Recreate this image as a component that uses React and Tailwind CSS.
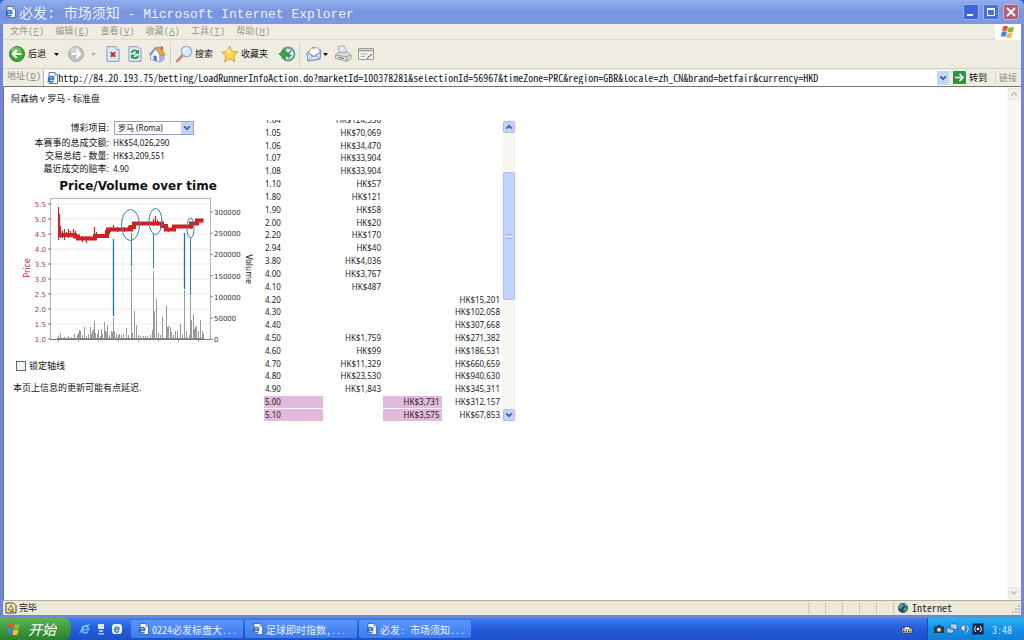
import React, { useState } from 'react';

const ADDRESS =
  'http://84.20.193.75/betting/LoadRunnerInfoAction.do?marketId=100378281&selectionId=56967&timeZone=PRC&region=GBR&locale=zh_CN&brand=betfair&currency=HKD';

const MENUS = [
  ['文件', 'F'],
  ['编辑', 'E'],
  ['查看', 'V'],
  ['收藏', 'A'],
  ['工具', 'T'],
  ['帮助', 'H'],
];

const SUMMARY = [
  ['本赛事的总成交额:', 'HK$54,026,290'],
  ['交易总结 - 数量:', 'HK$3,209,551'],
  ['最近成交的赔率:', '4.90'],
];

// odds, to back, to lay, traded
const ROWS = [
  ['1.04', 'HK$124,356', '', ''],
  ['1.05', 'HK$70,069', '', ''],
  ['1.06', 'HK$34,470', '', ''],
  ['1.07', 'HK$33,904', '', ''],
  ['1.08', 'HK$33,904', '', ''],
  ['1.10', 'HK$57', '', ''],
  ['1.80', 'HK$121', '', ''],
  ['1.90', 'HK$58', '', ''],
  ['2.00', 'HK$20', '', ''],
  ['2.20', 'HK$170', '', ''],
  ['2.94', 'HK$40', '', ''],
  ['3.80', 'HK$4,036', '', ''],
  ['4.00', 'HK$3,767', '', ''],
  ['4.10', 'HK$487', '', ''],
  ['4.20', '', '', 'HK$15,201'],
  ['4.30', '', '', 'HK$102,058'],
  ['4.40', '', '', 'HK$307,668'],
  ['4.50', 'HK$1,759', '', 'HK$271,382'],
  ['4.60', 'HK$99', '', 'HK$186,531'],
  ['4.70', 'HK$11,329', '', 'HK$660,659'],
  ['4.80', 'HK$23,530', '', 'HK$940,630'],
  ['4.90', 'HK$1,843', '', 'HK$345,311'],
  ['5.00', '', 'HK$3,731', 'HK$312,157'],
  ['5.10', '', 'HK$3,575', 'HK$67,853'],
];

const PRICE_TICKS = ['5.5', '5.0', '4.5', '4.0', '3.5', '3.0', '2.5', '2.0', '1.5', '1.0'];
const VOLUME_TICKS = ['300000', '250000', '200000', '150000', '100000', '50000', '0'];

// x, height
const VOLUMES = [
  [38, 3], [40, 6], [44, 2], [48, 3], [51, 2], [54, 5], [57, 4], [58, 6], [59, 9], [60, 8],
  [62, 4], [64, 12], [66, 3], [68, 5], [70, 12], [71, 5], [72, 8], [73, 10], [74, 18], [75, 6], [77, 5],
  [78, 9], [80, 3], [81, 10], [82, 5], [84, 17], [85, 8], [86, 7], [87, 14], [89, 4], [91, 8], [92, 7],
  [93, 21], [94, 8], [96, 5], [98, 4], [99, 5], [101, 4], [103, 5], [106, 11], [108, 4],
  [111, 71], [112, 6], [114, 28], [116, 14], [118, 4], [120, 3], [123, 3], [125, 3], [127, 3], [130, 4],
  [132, 9], [133, 68], [134, 28], [136, 40], [138, 6], [140, 4], [142, 22], [146, 33], [147, 12],
  [148, 13], [150, 12], [151, 7], [153, 4], [155, 8], [157, 8], [160, 15], [162, 5], [164, 49],
  [166, 8], [169, 4], [170, 43], [171, 19], [173, 25], [174, 10], [175, 12], [176, 13], [178, 8], [180, 19],
  [182, 8], [183, 5],
];

// x, top and bottom of the short price swings around the main line
const SWINGS = [
  [39, 36, 58], [40, 48, 60], [42, 53, 60], [44, 51, 62], [46, 54, 59], [48, 51, 60], [50, 53, 58], [53, 51, 58],
  [55, 53, 60], [58, 57, 62], [62, 58, 64], [66, 58, 65], [69, 58, 62], [74, 49, 60], [76, 54, 60], [84, 56, 60],
  [90, 49, 54], [93, 47, 53], [97, 49, 54], [104, 49, 54], [108, 48, 53], [133, 41, 48], [135, 38, 46], [137, 42, 48],
  [142, 45, 50], [148, 50, 54], [171, 45, 51],
];

const IeIcon = ({ className }) => (
  <svg viewBox="0 0 12 12" className={className} aria-hidden="true">
    <path d="M3 .5h6l2.500 2.500v8.500H3z" fill="#fff" stroke="#2c4a8c" strokeWidth=".7" />
    <path d="M9 .5v2.500h2.500" fill="#cfdcf5" stroke="#2c4a8c" strokeWidth=".6" />
    <path d="M7.700 7H2.500a2.700 2.700 0 0 1 5.200-.7zM7.500 8.700a2.700 2.700 0 0 1-5-1.700" fill="none" stroke="#2468c0" strokeWidth="1.500" />
    <path d="M.6 10.200c1.500 0 6-3 8.300-6.600" fill="none" stroke="#3a86d8" strokeWidth=".8" />
  </svg>
);

const BlueE = () => (
  <svg viewBox="0 0 12 12" className="h-3 w-3" aria-hidden="true">
    <path d="M9.500 6.500H3a3.300 3.300 0 0 1 6.500-.9zM9 8.500a3.300 3.300 0 0 1-6-2" fill="none" stroke="#5fc0ff" strokeWidth="1.700" />
    <path d="M1.200 10.500C.3 8 5 2 10.800 1.700" fill="none" stroke="#8fd4ff" strokeWidth=".9" />
  </svg>
);

const WindowsFlag = ({ className }) => (
  <svg viewBox="0 0 16 14" className={className} aria-hidden="true">
    <path d="M3 1.500c2-1.200 3.500-1 5 0L7 6.300c-1.700-1-3.200-1-5 0z" fill="#e8542c" />
    <path d="M8.700 1.800c1.800 1 3.500.9 5.300 0l-1.200 5c-1.800.9-3.400.9-5.100 0z" fill="#7dbb3c" />
    <path d="M1.800 7.100c1.800-1 3.300-1 5 0l-1.100 4.800c-1.700-1-3.200-1-5 0z" fill="#4a82dc" />
    <path d="M7.500 7.500c1.700 1 3.300.9 5.100 0l-1.200 4.900c-1.700.9-3.300.9-5 0z" fill="#f5c22e" />
  </svg>
);

const Caret = ({ className }) => (
  <svg viewBox="0 0 5 3" className={`h-[3px] w-[5px] ${className}`} aria-hidden="true">
    <path d="M0 0h5L2.500 3z" fill="currentColor" />
  </svg>
);

const Chevron = ({ up, className }) => (
  <svg viewBox="0 0 8 6" className={className} aria-hidden="true">
    <path d={up ? 'M1.200 4.600 4 1.800l2.800 2.800' : 'M1.200 1.400 4 4.200l2.800-2.800'} fill="none" stroke="currentColor" strokeWidth="1.800" />
  </svg>
);

const ArrowBall = ({ forward }) => (
  <svg viewBox="0 0 18 18" className="h-[18px] w-[18px]" aria-hidden="true">
    <circle cx="9" cy="9" r="7.500" fill={forward ? '#c2c2be' : '#3fa834'} stroke={forward ? '#acaca8' : '#2c8426'} />
    <ellipse cx="8" cy="5.500" rx="5" ry="3.400" fill="#fff" opacity=".3" />
    <path d={forward ? 'M4.500 9h8M9.200 5l4 4-4 4' : 'M13.500 9h-8M8.800 5l-4 4 4 4'} fill="none" stroke="#fff" strokeWidth="2" />
  </svg>
);

const StopIcon = () => (
  <svg viewBox="0 0 14 16" className="h-4 w-3.5" aria-hidden="true">
    <path d="M1 .7h9l3 3v11.600H1z" fill="#dce9fc" stroke="#7c98cc" />
    <path d="M10 .7v3h3" fill="#fff" stroke="#7c98cc" strokeWidth=".8" />
    <path d="m4.800 6.300 4.400 4.400m0-4.400-4.400 4.400" stroke="#cc3018" strokeWidth="2.200" />
  </svg>
);

const RefreshIcon = () => (
  <svg viewBox="0 0 14 16" className="h-4 w-3.5" aria-hidden="true">
    <path d="M1 .7h9l3 3v11.600H1z" fill="#dce9fc" stroke="#7c98cc" />
    <path d="M3.700 7c.3-2.600 4-3.600 5.800-1.300" fill="none" stroke="#2a9a34" strokeWidth="1.900" />
    <path d="M11 3.500v4.300H6.700z" fill="#2a9a34" />
    <path d="M10.300 9.500c-.3 2.600-4 3.600-5.800 1.300" fill="none" stroke="#2a9a34" strokeWidth="1.900" />
    <path d="M3 13V8.700h4.300z" fill="#2a9a34" />
  </svg>
);

const HomeIcon = () => (
  <svg viewBox="0 0 18 18" className="h-[18px] w-[18px]" aria-hidden="true">
    <path d="M12.500 1.500h2.300v5h-2.300z" fill="#c0522c" />
    <path d="M2.500 9 7 4l5 5v8l-9.500-2.500z" fill="#f2f6ff" stroke="#7c92c4" strokeWidth=".7" />
    <path d="m12 9 4 .5v5L12 17z" fill="#a4bce8" stroke="#7c92c4" strokeWidth=".7" />
    <path d="M.8 9.800 7 2.300l1.500.7L3.300 10.300z" fill="#6f97dc" />
    <path d="M7.300 2.300 11.500 2l6 7.500-5 1.200z" fill="#e9a052" stroke="#b8702c" strokeWidth=".5" />
    <path d="m5.500 10.500 3.300.7v5l-3.300-.9z" fill="#5c7cc0" />
  </svg>
);

const SearchIcon = () => (
  <svg viewBox="0 0 18 18" className="h-[18px] w-[18px]" aria-hidden="true">
    <path d="m7.200 10.800-5 5.300" stroke="#c98a68" strokeWidth="2.800" strokeLinecap="round" />
    <circle cx="11.500" cy="6.500" r="5.200" fill="#d5ecfc" stroke="#8cb0dc" strokeWidth="1.300" />
    <path d="M8.500 6c.3-1.500 1.300-2.300 2.800-2.400" fill="none" stroke="#fff" strokeWidth="1.200" />
  </svg>
);

const StarIcon = () => (
  <svg viewBox="0 0 18 18" className="h-[18px] w-[18px]" aria-hidden="true">
    <path d="m8.500 1.200 2.300 5.100 6.200.6-4.600 4 1.600 5.800-5.300-3-5.200 3.200 1.400-6L.8 7.200l5.800-.7z" fill="#fbd850" stroke="#d09a28" strokeWidth=".9" />
    <path d="m8.500 3.500 1.500 3.800-5 .8z" fill="#fff4b8" />
  </svg>
);

const HistoryIcon = () => (
  <svg viewBox="0 0 18 18" className="h-[18px] w-[18px]" aria-hidden="true">
    <circle cx="10" cy="9" r="6.500" fill="#d6e8ee" stroke="#5c9c8c" strokeWidth="1.800" />
    <path d="M10 9.500 13.500 5M10 9.500l3.500 1.500" stroke="#3b6a94" strokeWidth="1.200" />
    <path d="M.8 9 7.500 4v3c3 0 4.300 2.500 3.800 6.500-.8-2-1.800-2.600-3.800-2.500v3z" fill="#3aa63c" stroke="#237a2c" strokeWidth=".6" />
  </svg>
);

const MailIcon = () => (
  <svg viewBox="0 0 18 18" className="h-[18px] w-[18px]" aria-hidden="true">
    <path d="m2 8 6-6 8 3-1 9-12 2z" fill="#b8d4f4" stroke="#6488c0" strokeWidth=".8" />
    <path d="m5 4 8-1.500 1.500 5L9 11 4.500 8.500z" fill="#fff" stroke="#e0a878" strokeWidth=".8" />
    <path d="m2 8 7 4 6.500-5-.5 7-12 2z" fill="#d9e9fc" stroke="#6488c0" strokeWidth=".8" />
    <path d="m3 16 4.500-5m7.500 3-4.500-3.200" stroke="#6488c0" strokeWidth=".7" />
  </svg>
);

const PrintIcon = () => (
  <svg viewBox="0 0 18 18" className="h-[18px] w-[18px]" aria-hidden="true">
    <path d="M4 1.500 10 1l3 7-7 .5z" fill="#e4edfa" stroke="#8c9cb8" strokeWidth=".8" />
    <path d="m1.500 10 3-2.500 9-.5 3.500 3v3.500l-4 3-11.500-3z" fill="#dcdcd8" stroke="#94948e" strokeWidth=".8" />
    <path d="m1.500 10 11 1.800L17 10m-4.500 1.800v4.500" fill="none" stroke="#94948e" strokeWidth=".8" />
    <path d="m4.500 12.500 5.500 1" stroke="#5c6c8c" strokeWidth="1.200" />
  </svg>
);

const DiscussIcon = () => (
  <svg viewBox="0 0 18 14" className="h-3.5 w-[18px]" aria-hidden="true">
    <path d="M1.500 1.500h15v11h-15z" fill="#f4f4f0" stroke="#9c9c98" />
    <path d="M1.500 3.500h15" stroke="#9c9c98" strokeWidth="1.600" />
    <path d="M3.500 7h7m-7 2.500H8" stroke="#a8a8a4" />
    <path d="M10 11.500 15 7" stroke="#84847c" strokeWidth="1.300" />
  </svg>
);

const Globe = () => (
  <svg viewBox="0 0 12 12" className="h-3 w-3" aria-hidden="true">
    <circle cx="6" cy="6" r="5" fill="#1e4a7c" />
    <path d="M2 3.500C4 1 6 1.500 6.500 3S4.500 5 4 6.500 2 6 1.500 6zM7 6c2-1.500 3.500-.5 3.500.5S8.500 10 7.500 9.500 6 7 7 6z" fill="#4fa868" />
    <path d="M7.500 2.500 9.500 4" stroke="#bfe0f4" />
  </svg>
);

const PriceChart = () => (
  <svg viewBox="0 0 240 170" className="block h-[170px] w-[240px]" role="img" aria-label="Price/Volume over time">
    <text x="118" y="12" textAnchor="middle" className="fill-[#111] font-['DejaVu_Sans',sans-serif] text-[12px] font-bold">
      Price/Volume over time
    </text>
    <rect x="30.500" y="20.500" width="160" height="141" fill="#fff" stroke="#b4b4b4" />
    {PRICE_TICKS.map((tick, i) => (
      <g key={tick}>
        <path d={`M31 ${26 + i * 15}h159`} stroke="#ececec" />
        <path d={`M28 ${26 + i * 15}h3`} stroke="#b06060" />
        <text x="26" y={29 + i * 15} textAnchor="end" className="fill-[#a83a3a] font-['DejaVu_Sans',sans-serif] text-[7px]">
          {tick}
        </text>
      </g>
    ))}
    {VOLUME_TICKS.map((tick, i) => (
      <g key={tick}>
        <path d={`M190 ${34 + i * 21.2}h3`} stroke="#888" />
        <text x="194" y={37 + i * 21.2} className="fill-[#333] font-['DejaVu_Sans',sans-serif] text-[7px]">
          {tick}
        </text>
      </g>
    ))}
    <text transform="translate(10 90) rotate(-90)" textAnchor="middle" className="fill-[#a83a3a] font-['DejaVu_Sans',sans-serif] text-[8px]">
      Price
    </text>
    <text transform="translate(226 91) rotate(90)" textAnchor="middle" className="fill-[#222] font-['DejaVu_Sans',sans-serif] text-[8px]">
      Volume
    </text>
    <path d={VOLUMES.map(([x, h]) => `M${x + 0.5} 161v-${h}`).join('')} stroke="#9a9a9a" />
    <path d="M37 160.500h147" stroke="#8c8c8c" />
    <path d="M30.500 161.500h160" stroke="#777" />
    <path d="M38.500 161v3M58.500 161v3M78.500 161v3M98.500 161v3M118.500 161v3M138.500 161v3M158.500 161v3M178.500 161v3" stroke="#888" strokeWidth=".7" />
    <path d={`M38.500 62V29${SWINGS.map(([x, top, bottom]) => `M${x + 0.5} ${top}V${bottom}`).join('')}`} stroke="#c62828" strokeWidth="1.200" />
    <path
      d="M39 57H55V58.500H58V60.500H75V58H87V54H88V51.500H111V49H114V45.500H142V48H146V51.500H154V48.500H171V45.500H177V42.500H183.500"
      fill="none"
      stroke="#cc2222"
      strokeWidth="4"
    />
    <g fill="none" stroke="#2f83c2">
      <ellipse cx="110.500" cy="47" rx="9" ry="15.500" />
      <ellipse cx="135.500" cy="43.500" rx="6.500" ry="13" />
      <ellipse cx="170.500" cy="50" rx="3.500" ry="10" />
      <path d="M93.500 61v77M164.500 55v56" stroke="#1576b4" strokeWidth="1.300" />
      <path d="M111.500 55v34M133.500 55v35M170.500 60v57" />
    </g>
  </svg>
);

const ToolButton = ({ label, className, children }) => (
  <button type="button" aria-label={label} className={`flex shrink-0 items-center whitespace-nowrap ${className}`}>
    {children}
  </button>
);

const BrowserChrome = () => (
  <header>
    <div className="flex h-6 items-center rounded-t-md bg-linear-to-b from-[#92aeee] via-[#7894de] to-[#7b99e4] pr-[5px] pl-1">
      <IeIcon className="h-3 w-3" />
      <h1 className="ml-[3px] flex-1 truncate pt-1 font-['Liberation_Mono','Noto_Sans_CJK_SC',monospace] text-[13px] leading-5 text-[#eef3ff]">
        <span className="text-[14px]">必发: 市场须知</span> - Microsoft Internet Explorer
      </h1>
      <div className="flex gap-1">
        <button type="button" aria-label="最小化" className="flex h-4 w-4 items-end rounded-xs border border-[#9db4f0] bg-[#3f66d4] p-[3px]">
          <span className="h-0.5 w-1.5 bg-white" />
        </button>
        <button type="button" aria-label="最大化" className="flex h-4 w-4 items-center justify-center rounded-xs border border-[#9db4f0] bg-[#4a70d8]">
          <span className="h-2 w-2 border border-t-2 border-white" />
        </button>
        <button type="button" aria-label="关闭" className="flex h-4 w-4 items-center justify-center rounded-xs border border-[#d8b0c4] bg-[#b0607c]">
          <svg viewBox="0 0 10 10" className="h-2.5 w-2.5" aria-hidden="true">
            <path d="m1 1 8 8m0-8L1 9" stroke="#fff" strokeWidth="1.800" />
          </svg>
        </button>
      </div>
    </div>

    <div className="mx-[3px] bg-[#efede2]">
      <div className="flex h-4 items-center border-b border-[#dddacb]">
        <nav className="flex flex-1 gap-[11px] pl-[7px] font-['Liberation_Mono','Noto_Sans_CJK_SC',monospace] text-[9px] leading-4 text-[#99978e]">
          {MENUS.map(([name, key]) => (
            <button type="button" key={key} className="whitespace-nowrap">
              {name}(<u>{key}</u>)
            </button>
          ))}
        </nav>
        <div className="flex h-4 w-[26px] items-center justify-center bg-white">
          <WindowsFlag className="h-3.5 w-4" />
        </div>
      </div>

      <div className="flex h-[29px] items-center border-b border-[#d5d2c3] pl-[5px] font-['Noto_Sans_CJK_SC',sans-serif] text-[9px] text-[#111]">
        <ToolButton label="后退" className="gap-0.5">
          <ArrowBall />
          后退
        </ToolButton>
        <Caret className="ml-2" />
        <ToolButton label="前进" className="ml-2">
          <ArrowBall forward />
        </ToolButton>
        <Caret className="ml-1.5 text-[#b4b2a8]" />
        <ToolButton label="停止" className="ml-2.5">
          <StopIcon />
        </ToolButton>
        <ToolButton label="刷新" className="ml-2">
          <RefreshIcon />
        </ToolButton>
        <ToolButton label="主页" className="ml-1.5">
          <HomeIcon />
        </ToolButton>
        <span className="ml-1 h-6 w-px bg-[#d5d2c3]" />
        <ToolButton label="搜索" className="ml-1 gap-0.5">
          <SearchIcon />
          搜索
        </ToolButton>
        <ToolButton label="收藏夹" className="ml-2 gap-0.5">
          <StarIcon />
          收藏夹
        </ToolButton>
        <ToolButton label="历史" className="ml-2.5">
          <HistoryIcon />
        </ToolButton>
        <span className="ml-[3px] h-6 w-px bg-[#d5d2c3]" />
        <ToolButton label="邮件" className="ml-[5px]">
          <MailIcon />
        </ToolButton>
        <Caret />
        <ToolButton label="打印" className="ml-1.5">
          <PrintIcon />
        </ToolButton>
        <ToolButton label="讨论" className="ml-[5px]">
          <DiscussIcon />
        </ToolButton>
      </div>

      <form className="flex h-[17px] items-center pl-1 font-['Noto_Sans_CJK_SC',sans-serif] text-[9px]" onSubmit={(e) => e.preventDefault()}>
        <label htmlFor="address" className="whitespace-nowrap font-['Liberation_Mono','Noto_Sans_CJK_SC',monospace] text-[#8c8a80]">
          地址(<u>D</u>)
        </label>
        <div className="ml-0.5 flex h-4 min-w-0 flex-1 items-center border-l border-[#a8b8cc] bg-white pl-0.5">
          <IeIcon className="h-3 w-3 shrink-0" />
          <input
            id="address"
            defaultValue={ADDRESS}
            className="min-w-0 flex-1 font-['Noto_Sans_Mono_CJK_SC','Liberation_Mono',monospace] text-[10px] leading-3 text-[#111] outline-none"
          />
          <button type="button" aria-label="展开地址" className="flex h-3.5 w-3 items-center justify-center bg-[#c6d5fa] text-[#3d5a9c]">
            <Chevron className="h-1.5 w-2" />
          </button>
        </div>
        <button type="submit" className="ml-1 flex items-center gap-[3px] whitespace-nowrap text-[#111]">
          <svg viewBox="0 0 13 13" className="h-[13px] w-[13px]" aria-hidden="true">
            <rect width="13" height="13" rx="1" fill="#2f9440" />
            <path d="M2 6.500h8M6.500 3l3.500 3.500L6.500 10" fill="none" stroke="#fff" strokeWidth="1.700" />
          </svg>
          转到
        </button>
        <span className="ml-2 border-l border-[#d5d2c3] pr-1 pl-[3px] whitespace-nowrap text-[#8c8a80]">链接</span>
      </form>
    </div>
  </header>
);

const OddsTable = () => (
  <div className="flex h-[302px] w-[253px] shrink-0">
    <div className="flex flex-1 flex-col justify-end overflow-hidden">
      <table className="h-[309px] w-full shrink-0 table-fixed border-separate border-spacing-x-px border-spacing-y-px font-['Noto_Sans',sans-serif] text-[8px] leading-[10px] text-[#222]">
        <tbody>
          {ROWS.map(([odds, back, lay, traded]) => (
            <tr key={odds}>
              <td className={lay ? 'bg-[#e2b9da] p-0 pl-px' : 'p-0 pl-px'}>{odds}</td>
              <td className="p-0 pr-px text-right">{back}</td>
              <td className={lay ? 'bg-[#e2b9da] p-0 pr-0.5 text-right' : 'p-0'}>{lay}</td>
              <td className="p-0 pr-px text-right">{traded}</td>
            </tr>
          ))}
        </tbody>
      </table>
    </div>
    <div className="flex w-3.5 flex-col bg-[#f7f6f1] p-px">
      <button type="button" aria-label="向上" className="flex h-3 items-center justify-center rounded-xs border border-[#a9bdf0] bg-[#c3d3fb] text-[#46619c]">
        <Chevron up className="h-1.5 w-2" />
      </button>
      <div className="mt-[39px] flex h-32 flex-col items-center justify-center gap-px rounded-xs border border-[#aec2f4] bg-[#c3d4fc]">
        <span className="h-px w-1.5 bg-[#9cb2e8]" />
        <span className="h-px w-1.5 bg-[#eef3ff]" />
        <span className="h-px w-1.5 bg-[#9cb2e8]" />
      </div>
      <button type="button" aria-label="向下" className="mt-auto flex h-3 items-center justify-center rounded-xs border border-[#a9bdf0] bg-[#c3d3fb] text-[#46619c]">
        <Chevron className="h-1.5 w-2" />
      </button>
    </div>
  </div>
);

const MarketPage = () => {
  const [locked, setLocked] = useState(false);

  return (
    <main className="min-w-0 flex-1 pt-1.5 pl-[7px] font-['Noto_Sans','Noto_Sans_CJK_SC',sans-serif] text-[9px] text-[#111]">
      <h2 className="leading-3">阿森纳 v 罗马 - 标准盘</h2>
      <div className="mt-[15px] flex">
        <section className="w-[252px] shrink-0">
          <div className="flex h-4 items-center">
            <label htmlFor="runner" className="w-[98px] text-right">
              博彩项目:
            </label>
            <div className="ml-[5px] flex h-3.5 w-20 items-center border border-[#8fa6c4] bg-white">
              <select id="runner" className="min-w-0 flex-1 appearance-none pl-[3px] text-[8px] leading-3 outline-none">
                <option>罗马 (Roma)</option>
              </select>
              <span className="pointer-events-none flex h-3 w-3 items-center justify-center bg-[#c3d3fb] text-[#46619c]">
                <Chevron className="h-1.5 w-2" />
              </span>
            </div>
          </div>
          <dl>
            {SUMMARY.map(([label, value]) => (
              <div key={label} className="flex h-[13px] items-center leading-[13px]">
                <dt className="w-[98px] whitespace-nowrap text-right">{label}</dt>
                <dd className="ml-1 text-[8px]">{value}</dd>
              </div>
            ))}
          </dl>
          <div className="mt-[3px] pl-[9px]">
            <PriceChart />
          </div>
          <label className="mt-2.5 flex h-4 items-center gap-[3px] pl-[5px]">
            <input
              type="checkbox"
              checked={locked}
              onChange={(e) => setLocked(e.target.checked)}
              className="h-2.5 w-2.5 appearance-none border border-[#4c6c8c] bg-[#f2f4f4] checked:bg-[#4c6c8c]"
            />
            锁定轴线
          </label>
          <p className="mt-1.5 pl-0.5 leading-4">本页上信息的更新可能有点延迟.</p>
        </section>
        <OddsTable />
      </div>
    </main>
  );
};

const TASKS = ['0224必发标盘大...', '足球即时指数,...', '必发: 市场须知...'];

const Taskbar = () => (
  <footer className="flex h-[22px] items-center bg-linear-to-b from-[#3f7cf0] via-[#245cdc] to-[#1f50c8] font-['Noto_Sans_Mono_CJK_SC','Noto_Sans_CJK_SC',monospace] text-[10px]">
    <button type="button" className="flex h-full w-[71px] items-center gap-1.5 rounded-r-lg bg-linear-to-b from-[#5db45a] via-[#3c9a3c] to-[#2f8030] pl-1.5 font-['Noto_Sans_CJK_SC',sans-serif] text-sm leading-5 text-white italic">
      <WindowsFlag className="h-3.5 w-4" />
      开始
    </button>
    <div className="ml-2 flex gap-1">
      <BlueE />
      <svg viewBox="0 0 12 12" className="h-3 w-3" aria-hidden="true">
        <path d="M3 1h6v5H3z" fill="#d8e8fc" />
        <path d="M4 7h4v2H4zM3 10h6v1.500H3z" fill="#a8c4ec" />
      </svg>
      <svg viewBox="0 0 12 12" className="h-3 w-3" aria-hidden="true">
        <rect x="1" y="1" width="10" height="10" rx="3" fill="#e8f2fc" />
        <path d="M8.500 6.500h-5a2.500 2.500 0 0 1 4.900-.6M8 8.200A2.500 2.500 0 0 1 3.500 6.500" fill="none" stroke="#3c78b8" strokeWidth="1.300" />
      </svg>
    </div>
    <div className="ml-2 flex min-w-0 flex-1 gap-0.5">
      {TASKS.map((task) => (
        <button type="button" key={task} className="flex h-[18px] w-28 items-center gap-[3px] rounded-xs bg-linear-to-b from-[#5a94f8] to-[#3c7cf0] pl-1.5 whitespace-nowrap text-[#eaf1ff]">
          <IeIcon className="h-3 w-3 shrink-0" />
          {task}
        </button>
      ))}
    </div>
    <svg viewBox="0 0 12 10" className="mr-3.5 h-2.5 w-3" aria-hidden="true">
      <path d="M3.500 2.500h5V4h2.500v5H1V4h2.500z" fill="#e8e8e0" stroke="#333" strokeWidth=".8" />
      <path d="M2 6h8M2 7.500h8" stroke="#333" strokeDasharray="1.500 1" />
    </svg>
    <div className="flex h-full w-[97px] items-center gap-px border-l border-[#1450b0] bg-linear-to-b from-[#2cb0f4] via-[#1490ea] to-[#1080d4] pl-[5px] text-[10px] text-[#cfeaff]">
      <svg viewBox="0 0 12 12" className="h-3 w-3" aria-hidden="true">
        <path d="M1 3.500h3l1-1.500h3v1.500h3V10H1z" fill="#2c3a44" />
        <circle cx="6" cy="6.700" r="2" fill="#c8dce8" />
      </svg>
      <svg viewBox="0 0 12 12" className="h-3 w-3" aria-hidden="true">
        <path d="M4.500 1H11v5.500H4.500zM1 5h6.500v5H1z" fill="#a8d8f8" stroke="#2c5c9c" strokeWidth=".7" />
      </svg>
      <svg viewBox="0 0 12 12" className="h-3 w-3" aria-hidden="true">
        <path d="M2 3.500 6 1.500v7L2 6.500z" fill="#e4e4e4" stroke="#555" strokeWidth=".6" />
        <path d="M7.500 2.500c2.500 2 2 5-1 7.500" fill="none" stroke="#d4e4f4" />
      </svg>
      <svg viewBox="0 0 12 12" className="h-3 w-3" aria-hidden="true">
        <rect x=".5" y=".5" width="11" height="11" fill="#16244c" />
        <circle cx="6" cy="6" r="1.300" fill="#fff" />
        <path d="M4 3C2.300 4.500 2.300 7.500 4 9m4-6c1.700 1.500 1.700 4.500 0 6" fill="none" stroke="#fff" />
      </svg>
      <time className="ml-[7px]">3:48</time>
    </div>
  </footer>
);

const App = () => (
  <div className="flex min-h-screen flex-col bg-[#2c62dc]">
    <div className="flex flex-1 flex-col rounded-t-md bg-[#7186d8] pb-[3px]">
      <BrowserChrome />
      <div className="mx-[3px] flex flex-1 border-t border-l border-[#77756c] bg-white">
        <MarketPage />
        <div className="flex w-3.5 flex-col justify-between bg-[#f8f7f3] p-px">
          <button type="button" aria-label="页面向上" className="flex h-3 items-center justify-center border border-[#e8e6dc] bg-[#f2f1ea] text-[#c8c6ba]">
            <Chevron up className="h-1.5 w-2" />
          </button>
          <button type="button" aria-label="页面向下" className="flex h-3 items-center justify-center border border-[#e8e6dc] bg-[#f2f1ea] text-[#c8c6ba]">
            <Chevron className="h-1.5 w-2" />
          </button>
        </div>
      </div>
      <div className="mx-[3px] flex h-[15px] items-center border-t border-[#b4b1a2] bg-[#ece9d8] pl-0.5 font-['Noto_Sans_Mono_CJK_SC','Noto_Sans_CJK_SC',monospace] text-[10px] leading-3 text-[#222]">
        <svg viewBox="0 0 12 12" className="h-3 w-3" aria-hidden="true">
          <path d="M1 1h7.500L11 3.500V11H1z" fill="#f4ecb0" stroke="#444" />
          <path d="m3 8 3-5 2.500 5zM5 9.500h4" fill="none" stroke="#7c7420" />
        </svg>
        <span className="ml-0.5 flex-1 text-[9px]">完毕</span>
        <div className="flex">
          {[1, 2, 3, 4, 5].map((pane) => (
            <span key={pane} className="h-3 w-[17px] border-l border-[#cbc8b8]" />
          ))}
        </div>
        <div className="flex w-32 items-center gap-[3px] border-l border-[#cbc8b8] pl-[3px]">
          <Globe />
          <span className="flex-1">Internet</span>
          <svg viewBox="0 0 9 9" className="h-[9px] w-[9px]" aria-hidden="true">
            <path d="M6 1h2v2H6zM3 4h2v2H3zM6 4h2v2H6zM0 7h2v2H0zM3 7h2v2H3zM6 7h2v2H6z" fill="#c4c1b0" />
          </svg>
        </div>
      </div>
    </div>
    <Taskbar />
  </div>
);

export default App;
